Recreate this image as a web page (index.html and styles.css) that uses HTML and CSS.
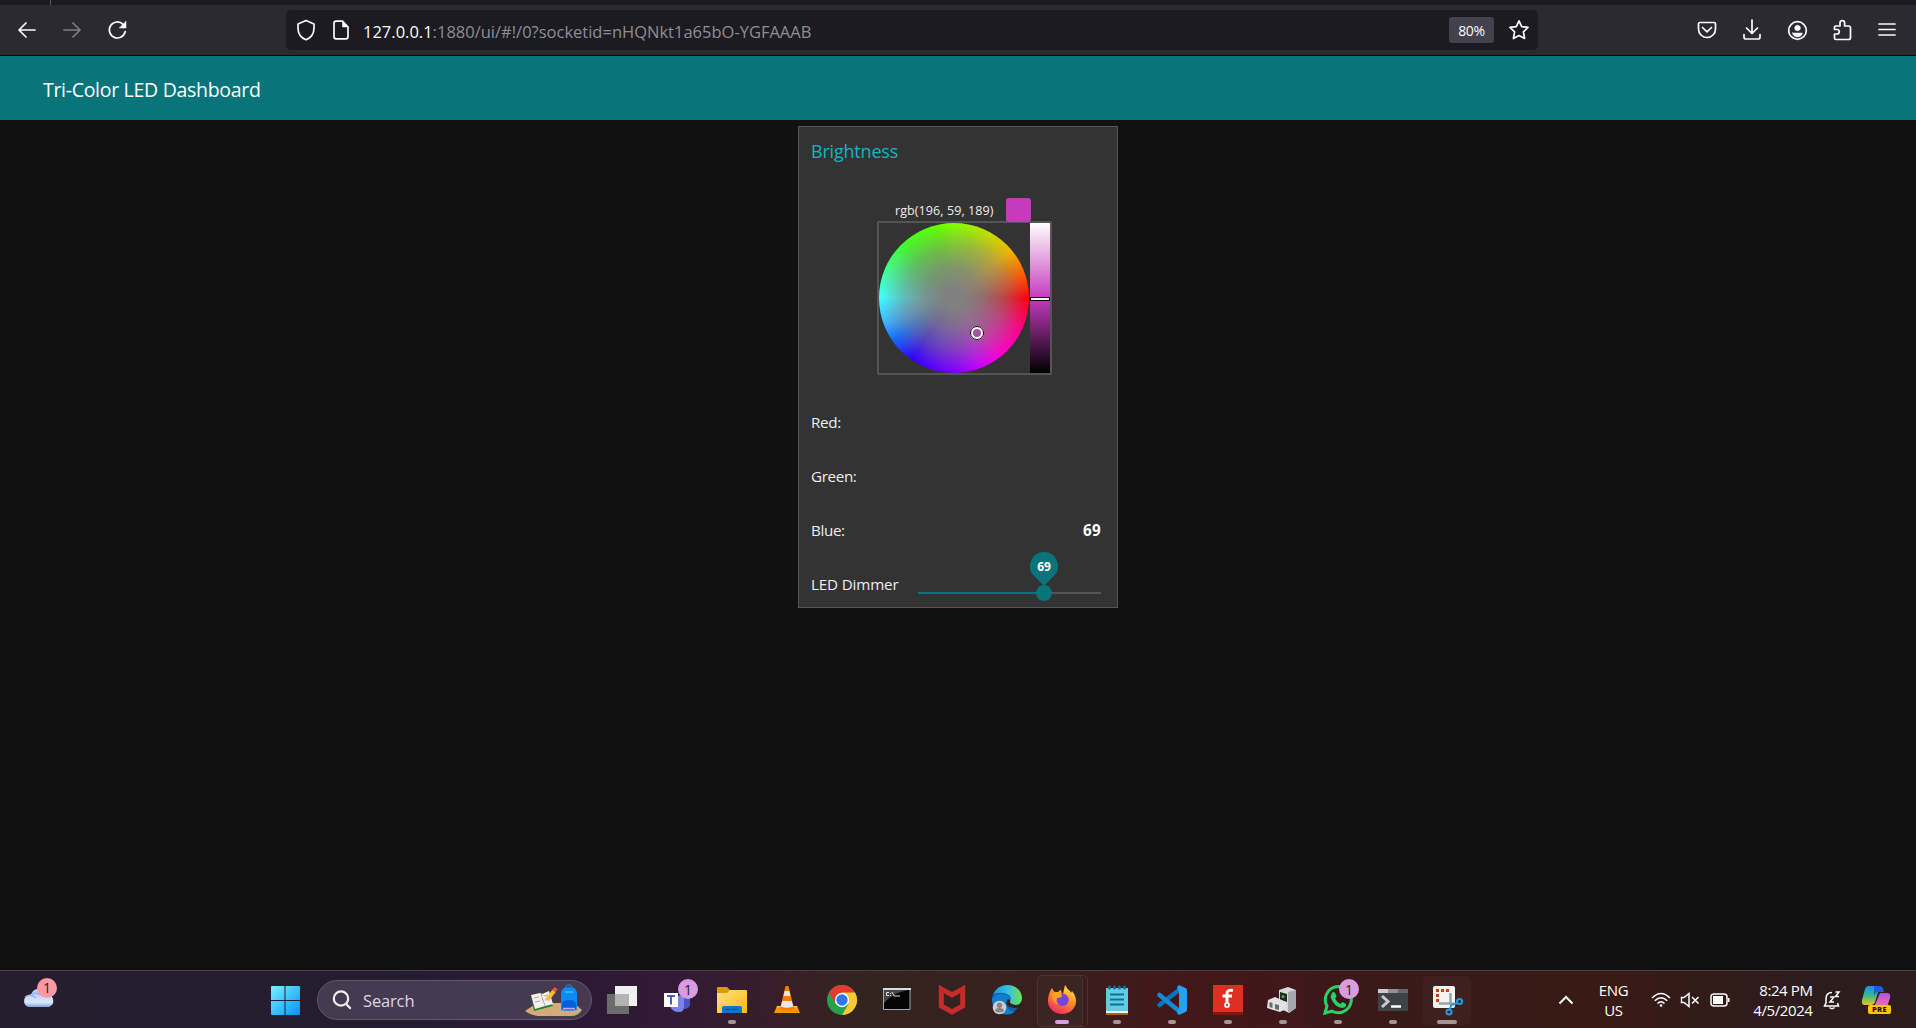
FILE: index.html
```html
<!DOCTYPE html>
<html lang="en">
<head>
<meta charset="utf-8">
<title>Tri-Color LED Dashboard</title>
<link rel="stylesheet" href="styles.css">
</head>
<body>
<div class="tabstrip"><i class="tab-divider"></i></div>
<nav class="toolbar">
  <div class="nav-buttons">
    <svg width="20" height="20" viewBox="0 0 20 20"><path d="M18 10H2M9 3 2 10l7 7"/></svg>
    <svg class="disabled" width="20" height="20" viewBox="0 0 20 20"><path d="M2 10h16M11 3l7 7-7 7"/></svg>
    <svg width="20" height="20" viewBox="0 0 20 20"><path d="M18.200 11.500A8 8 0 1 1 16 4.300l2 2"/><path class="solid" d="M19 1.500v6.500h-6.500z"/></svg>
  </div>
  <div class="urlbar">
    <svg width="20" height="22" viewBox="0 0 20 22"><path d="M10 1.500 18 5v4c0 6-3.500 10-8 11.800C5.500 19 2 15 2 9V5z"/></svg>
    <svg class="page-icon" width="18" height="20" viewBox="0 0 18 20"><path d="M10.500 1.200H4a2 2 0 0 0-2 2v13.600a2 2 0 0 0 2 2h10a2 2 0 0 0 2-2V7z"/><path class="solid" d="M10.500 1.200V7H16z"/></svg>
    <span class="url">127.0.0.1<span>:1880/ui/#!/0?socketid=nHQNkt1a65bO-YGFAAAB</span></span>
    <span class="zoom-level">80%</span>
    <svg width="22" height="22" viewBox="0 0 22 22"><path d="m11 1.800 2.700 5.800 6.300.8-4.600 4.400 1.200 6.700L11 16.600l-5.600 2.900 1.200-6.700L2 8.400l6.300-.8z"/></svg>
  </div>
  <div class="tools">
    <svg width="20" height="20" viewBox="0 0 20 20"><path d="M3 2.500h14a1.500 1.500 0 0 1 1.500 1.500v5a8.500 8.500 0 0 1-17 0V4A1.500 1.500 0 0 1 3 2.500zM5.500 7.500 10 11.800l4.500-4.300"/></svg>
    <svg width="20" height="20" viewBox="0 0 20 20"><path d="M10 0v13M4.500 8 10 13.500 15.500 8M2 14.500V17a2 2 0 0 0 2 2h12a2 2 0 0 0 2-2v-2.500"/></svg>
    <svg width="20" height="20" viewBox="0 0 20 20"><circle cx="10.500" cy="10.500" r="8.800"/><circle class="solid" cx="10.500" cy="8" r="2.800"/><path class="solid" d="M5.500 13h10q-1 4-5 4t-5-4z"/></svg>
    <svg width="20" height="22" viewBox="0 0 20 22"><path d="M3.500 7H8V4a2.300 2.300 0 0 1 4.600 0v3h3.900a2 2 0 0 1 2 2v9.500a2 2 0 0 1-2 2H4A1.500 1.500 0 0 1 2.500 19v-4H5a2 2 0 0 0 0-4.500H2.500V8a1 1 0 0 1 1-1z"/></svg>
    <svg width="20" height="20" viewBox="0 0 20 20"><path d="M2 4h16M2 9.500h16M2 15h16"/></svg>
  </div>
</nav>
<header class="appbar"><h1>Tri-Color LED Dashboard</h1></header>
<main class="content">
  <section class="card">
    <h2>Brightness</h2>
    <div class="picker">
      <div class="picker-head"><span>rgb(196, 59, 189)</span><i class="swatch"></i></div>
      <div class="picker-body">
        <div class="wheel"><i class="wheel-marker"></i></div>
        <div class="lightness"><i class="lightness-marker"></i></div>
      </div>
    </div>
    <div class="row"><span>Red:</span></div>
    <div class="row"><span>Green:</span></div>
    <div class="row"><span>Blue:</span><strong>69</strong></div>
    <div class="row dimmer"><span>LED Dimmer</span>
      <div class="slider"><i class="fill"></i><i class="thumb"></i>
        <svg class="pin" width="28" height="36" viewBox="0 0 28 36"><path d="M14 0a14 14 0 0 1 9.900 23.900L14 34 4.100 23.900A14 14 0 0 1 14 0z"/><text x="14" y="18.800">69</text></svg>
      </div>
    </div>
  </section>
</main>
<footer class="taskbar">
  <svg class="weather" width="36" height="32" viewBox="0 0 36 32">
    <defs><linearGradient id="cloud" x2="0" y2="1"><stop stop-color="#a8c6f6"/><stop offset=".75" stop-color="#dce8fa"/><stop offset="1" stop-color="#7fa2e0"/></linearGradient></defs>
    <path fill="url(#cloud)" d="M6 30a6 6 0 0 1-1-11.500 6 6 0 0 1 3-1A9 9 0 0 1 25 17.500a6.500 6.500 0 0 1 1 12.500z"/>
    <path fill="none" stroke="#8eb0ec" stroke-width="1.200" d="M2 20q6-4 11 1M9 17q5-2 8 1"/>
    <circle cx="24" cy="11" r="10" fill="#ff98a2"/><text class="badge" x="24" y="16">1</text>
  </svg>
  <svg class="start" width="30" height="30" viewBox="0 0 30 30">
    <defs><linearGradient id="win" x2="1" y2="1" gradientUnits="objectBoundingBox"><stop stop-color="#75f1ff"/><stop offset="1" stop-color="#0692fa"/></linearGradient></defs>
    <path fill="url(#win)" d="M1 2q0-1 1-1h12.500v14H1zM15.500 1H29q1 0 1 1v13H15.500zM1 16h13.500v14H2q-1 0-1-1zM15.500 16H30v13q0 1-1 1H15.500z"/>
  </svg>
  <div class="search">
    <svg width="20" height="20" viewBox="0 0 20 20"><circle cx="9" cy="8.500" r="7.200"/><path d="m14.200 14 4.500 4.800"/></svg>
    <span>Search</span>
    <svg class="scene" width="60" height="32" viewBox="0 0 60 32">
      <path fill="#d3ab78" d="m1 27 12-8h37l8 7q-4 6-11 6H14Q6 31 1 27z"/>
      <path fill="#248343" d="m7 12 3 15 19-5-3-6-14 6-3-11z"/><path fill="#f6f1ec" d="m7 11 9-2 2 1 7-3 4 13-8 2-10 3z"/><path fill="none" stroke="#aaa" d="m17 10 4 12M10 14l5-1M11 18l5-1M20 12l4-1M21 16l4-1"/>
      <path stroke="#f9bd35" stroke-width="4" d="m23 16 7-9"/><path stroke="#f1573d" stroke-width="4" d="m30 7 2-3"/>
      <rect x="41" y="1" width="8" height="8" rx="4" fill="none" stroke="#1a71dc" stroke-width="1.500"/><path fill="#0d8cf9" d="M37 26V10q0-7 8-7t8 7v16q-8 2-16 0z"/><path fill="#0460d8" d="M38 25v-5q0-4 7-4t7 4v5z"/><path stroke="#c79bff" stroke-width="1.500" d="M39 24.500h12"/><path stroke="#61c2ff" stroke-width="1.200" d="M41 8h8"/>
    </svg>
  </div>
  <div class="apps">
    <div class="app"><svg viewBox="0 0 30 30"><path fill="#6c6c6c" d="M0 9h22v20H0z"/><path fill="#f0f0f0" d="M8 1h22v20H8z"/><path fill="#b5b2b4" d="M8 9h14v12H8z"/></svg></div>
    <div class="app"><svg viewBox="0 0 30 30"><path fill="#4856c4" d="M17 10h11v10q-1 4-6 4z"/><path fill="#7b83eb" d="M8 11h14v11q0 5-5 5-7 0-9-6z"/><path fill="#fff" d="M2 8h14v14H2z"/><path fill="none" stroke="#5059c9" stroke-width="2" d="M5 11h8M9 11v8.500"/><circle cx="26" cy="4" r="10" fill="#da9be0"/><text class="badge" x="26" y="9.500">1</text></svg></div>
    <div class="app"><svg viewBox="0 0 30 30"><defs><linearGradient id="fold" x2="1" y2="1"><stop stop-color="#ffe084"/><stop offset="1" stop-color="#fdb913"/></linearGradient></defs><path fill="#d99a08" d="M0 3q0-1 1-1h9l3 3v5H0z"/><path fill="url(#fold)" d="M0 8h10l3-3h16q1 0 1 1v22H0z"/><path fill="#0c77c8" d="M5 28v-5q0-2 2-2h16q2 0 2 2v5z"/><path stroke="#064f8e" stroke-width="1.200" d="M8 24.500h14"/></svg><i class="dot"></i></div>
    <div class="app"><svg viewBox="0 0 30 30"><path fill="#ff9309" d="M5 21h20l3 7H2z"/><path fill="#ffbd4a" d="M5 21h20l.5 1.500H4.500z"/><path fill="#f57c00" d="m13.500 1h3L22 24q-7 3-14 0z"/><path fill="#e8e8e8" d="m12.700 6h4.600l1.200 5h-7zM10.300 16h9.500l1.500 5.500q-6.300 2.500-12.500 0z"/></svg></div>
    <div class="app"><svg viewBox="0 0 30 30"><circle cx="15" cy="15" r="15" fill="#26a149"/><path fill="#e33b2e" d="M2 7.500A15 15 0 0 1 28 7.500L15 8.500 8.500 18.700z"/><path fill="#fcc934" d="M15 30a15 15 0 0 0 13-22.500H15L21.500 19z"/><circle cx="15" cy="15" r="7.200" fill="#fff"/><circle cx="15" cy="15" r="5.700" fill="#2b78ef"/></svg></div>
    <div class="app"><svg viewBox="0 0 30 30"><path fill="#050505" stroke="#a3a8b3" d="M1.500 4h26.500v20.500H1.500z"/><path stroke="#d8dce5" stroke-width="2" d="M1 4h28"/><path fill="#464646" d="M2 5h24Q10 8 2 18z"/><path fill="none" stroke="#ddd" d="M7 7.500H4.500v3H7M8.500 8v1M8.500 10v1M10 7l2 4M12 11h6"/></svg></div>
    <div class="app"><svg viewBox="0 0 30 30"><path fill="none" stroke="#c62b2b" stroke-width="5" d="M4.300 4v17L15 27l10.700-6V4L15 10z"/></svg></div>
    <div class="app"><svg viewBox="0 0 30 30"><defs><linearGradient id="edge" x2="1"><stop stop-color="#1498dc"/><stop offset=".5" stop-color="#35bfe7"/><stop offset="1" stop-color="#71e34b"/></linearGradient></defs><circle cx="14" cy="15" r="14" fill="#0b5fad"/><path fill="#117fd0" d="M0 14Q4 7 13 9q6 2 5 7-5 1-3 6 3 5 8 4-4 5-12 3Q0 26 0 14z"/><path fill="url(#edge)" d="M1 10Q5 0 15 0c9 0 15 6 15 13q0 7-8 7-5 0-4-3 3-7-6-9Q4 7 1 10z"/><path fill="#33211f" d="M16 14q-4 5 2 8 6 2 10 0l3-3q-6 2-11 0-3-1-2-4z"/><circle cx="7.500" cy="22.500" r="6.800" fill="#d0d0d0"/><circle cx="7.500" cy="20.300" r="2.700" fill="#858585"/><path fill="#858585" d="M3 26q0-3 4.500-3t4.500 3q-4.500 3-9 0z"/></svg></div>
    <div class="app active"><svg viewBox="0 0 30 30"><defs><linearGradient id="fox" x1=".8" x2=".3" y2="1"><stop stop-color="#fff04b"/><stop offset=".45" stop-color="#ff9025"/><stop offset="1" stop-color="#f62661"/></linearGradient></defs><path fill="url(#fox)" d="M5 3q1 3 3 4l3 0q2-2 3-2 0 3 2 4l2-9q2 4 5 6l1 2 1-2q4 5 4 10a14 13 0 0 1-28 0Q1 9 5 3z"/><circle cx="15.500" cy="14.800" r="6.200" fill="#7545d9"/><path fill="#ff9e27" d="M5 9q6-3 10 1 0 3-5 3-2 6 4 7-9 0-9-11z"/></svg><i class="dot wide"></i></div>
    <div class="app"><svg viewBox="0 0 30 30"><path fill="#b45f0d" d="M4 26h22v4H4z"/><path fill="#f6f1ea" d="M4 25h22v3H4z"/><path fill="#64cbe4" d="M4 3h22v23H4z"/><path stroke="#087499" stroke-width="2" d="M8 9.500h14M8 14.500h14M8 19.500h14"/><path stroke="#087499" stroke-width="3" stroke-linecap="round" d="M7.500 2v1M12.500 2v1M17.500 2v1M22.500 2v1"/></svg><i class="dot"></i></div>
    <div class="app"><svg viewBox="0 0 30 30"><path fill="none" stroke="#0876bf" stroke-width="4.500" stroke-linejoin="round" stroke-linecap="round" d="M22 5 2.500 20"/><path fill="none" stroke="#138bd6" stroke-width="4.500" stroke-linecap="round" d="M2.500 10 22 26"/><path fill="#27a0f2" d="m22 0 6.500 3q1.500 1 1.500 2v20q0 1-1.500 2L22 30l-2-2 2-5V8l-2-6z"/></svg><i class="dot"></i></div>
    <div class="app"><svg viewBox="0 0 30 30"><path fill="#dc3022" d="M0 0h30v27H0z"/><path fill="#841807" d="M0 27h30v3H0z"/><path fill="none" stroke="#fff" stroke-width="3" d="M20 5.500q-6-1-6 3V18M9.500 11H19"/><circle cx="14" cy="20" r="2" fill="none" stroke="#fff" stroke-width="1.700"/></svg><i class="dot"></i></div>
    <div class="app"><svg class="device" viewBox="0 0 30 30"><path fill="#d8d9dc" d="m13 5 9-3 8 3v18l-7 5-10-5z"/><path fill="#a5a7ab" d="m22 7 8-2v18l-8 5z"/><path fill="#202923" d="m14 7 7 2v8l-7-2z"/><circle cx="17" cy="11.500" r="1.500" fill="#2ec82e"/><path fill="#e2e2e3" d="m2 15 7-3 11 5v7l-6 3-13-4z"/><path fill="#696b70" d="m3.500 17 3 1v5l-3-1zM9 19l4 1v5l-4-1z"/></svg><i class="dot"></i></div>
    <div class="app"><svg viewBox="0 0 30 30"><path fill="none" stroke="#25d366" stroke-width="3" d="m2 28 2-7a13 13 0 1 1 5 5z"/><path fill="#25d366" d="M9 8q2-2 3 0l1.500 3q0 1-1.500 2.500 2 4 5.500 5.500l2-2 3.500 2q1 3-4 4-8-1-11.500-11Q8 9.500 9 8z"/><circle cx="26" cy="4" r="10" fill="#da9be0"/><text class="badge" x="26" y="9.500">1</text></svg><i class="dot"></i></div>
    <div class="app"><svg viewBox="0 0 30 30"><path fill="#3e4347" d="M0 4h30v22H0z"/><path fill="#ccc" d="M0 4h10v4H0z"/><path fill="#929292" d="M10 4h10v4H10z"/><path fill="#65676b" d="M20 4h10v4H20z"/><path fill="none" stroke="#ccc" stroke-width="3" d="m4 11 6 5.500L4 22"/><path stroke="#fff" stroke-width="2.500" d="M13 21.500h10"/></svg><i class="dot"></i></div>
    <div class="app focused"><svg viewBox="0 0 30 30"><rect y="1" width="22" height="22" rx="2" fill="#f3f3f3"/><path fill="none" stroke="#d83b01" stroke-width="3" stroke-dasharray="3 2" d="M4.500 17V5.500H17"/><path fill="none" stroke="#9aa2aa" stroke-width="2.500" d="M17.500 8v12M6 18.500h15"/><g fill="none" stroke="#1e9be5" stroke-width="2"><circle cx="26.500" cy="16.500" r="2.600"/><circle cx="16" cy="27" r="2.600"/><path d="m19 20 5-2M18.500 19 17 24"/></g></svg><i class="dot widest"></i></div>
  </div>
  <div class="tray">
    <svg class="chevron" width="16" height="10" viewBox="0 0 16 10"><path d="m1.500 8.500 6.500-6.500 6.500 6.500"/></svg>
    <div class="lang"><span>ENG</span><span>US</span></div>
    <svg class="wifi" width="20" height="16" viewBox="0 0 20 16"><path d="M1 6q9-9 18 0M3.800 8.800q6.200-6 12.400 0M6.500 11.500q3.500-3.500 7 0"/><circle class="solid" cx="10" cy="13.500" r="1.300"/></svg>
    <svg class="sound" width="20" height="16" viewBox="0 0 20 16"><path d="M1.500 5.500v5H4l5 4V1.500l-5 4zM12 5l6.500 6.500M18.500 5 12 11.500"/></svg>
    <svg class="battery" width="20" height="14" viewBox="0 0 20 14"><rect x="1" y="1" width="16" height="12" rx="3"/><path class="solid" d="M3 3h10v8H3z"/><path d="M18.800 5v4"/></svg>
    <div class="clock"><span>8:24 PM</span><span>4/5/2024</span></div>
    <svg class="bell" width="18" height="20" viewBox="0 0 18 20"><path d="M9 2.500Q3 2.500 3 9v4l-1.500 3h14L14.500 13M6.500 17.500q2.500 2.500 5 0M7 7h4l-4 5h4M12.500 2H16l-3.500 4.500H16"/></svg>
    <svg class="copilot" width="30" height="30" viewBox="0 0 30 30"><defs><linearGradient id="cpa" x2="0" y2="1"><stop stop-color="#1b8df0"/><stop offset=".5" stop-color="#3cb98a"/><stop offset="1" stop-color="#ecc31b"/></linearGradient><linearGradient id="cpb" x2="0" y2="1"><stop stop-color="#b252ed"/><stop offset="1" stop-color="#f6709c"/></linearGradient></defs><path fill="url(#cpa)" d="M7 1h12l-5 16q-1 3-3 3H4q-4 0-3-5L4 4q1-3 3-3z"/><path fill="#1b5fd8" d="M13 1h6q3 0 4 6h-6q-3 0-4 5z"/><path fill="url(#cpb)" d="M19 8h7q4 0 3 5l-3 9H13z"/><rect x="7" y="20" width="23" height="9" rx="2" fill="#fdc400"/><text x="18.500" y="27.300">PRE</text></svg>
  </div>
</footer>
</body>
</html>
```

FILE: styles.css
```css
* { box-sizing: border-box; }
body { margin: 0; height: 1028px; overflow: hidden; display: flex; flex-direction: column; background: #111; color: #eee; font-family: "Open Sans", "Noto Sans", sans-serif; font-size: 15px; }
h1, h2 { margin: 0; font-weight: 400; }
span, h1 { white-space: nowrap; }
svg { display: block; flex: none; overflow: visible; }

.tabstrip { height: 5px; background: #1c1b22; padding-left: 50px; }
.tab-divider { display: block; width: 1px; height: 5px; background: #5b5a62; }
.toolbar { height: 51px; background: #2b2a33; border-bottom: 1px solid #0c0c0d; display: flex; align-items: center; }
.toolbar svg { fill: none; stroke: #fbfbfe; stroke-width: 1.7; stroke-linejoin: round; stroke-linecap: round; }
.toolbar .solid { fill: #fbfbfe; stroke-width: .5; }
.nav-buttons { display: flex; gap: 25px; width: 286px; padding-left: 17px; }
.nav-buttons .disabled { opacity: .4; }
.urlbar { width: 1252px; height: 40px; border-radius: 5px; background: #1c1b22; display: flex; align-items: center; padding: 0 8px 0 10px; }
.page-icon { margin-left: 16px; }
.url { margin-left: 13px; flex: 1; font-size: 16.5px; color: #fbfbfe; padding-top: 2px; }
.url span { color: #8f8e96; }
.zoom-level { width: 45px; height: 26px; margin-right: 14px; border-radius: 3px; background: #42414d; color: #fbfbfe; text-align: center; font-size: 14px; letter-spacing: -.3px; line-height: 28px; }
.tools { margin-left: 159px; display: flex; align-items: center; gap: 25px; }

.appbar { height: 64px; background: #097479; color: #fff; padding-left: 43px; display: flex; align-items: center; }
.appbar h1 { font-size: 19.5px; letter-spacing: -.3px; padding-top: 3px; }
.content { height: 850px; padding-top: 6px; }
.card { width: 320px; height: 482px; margin-left: 798px; background: #333; border: 1px solid #555; padding: 0 16px 0 12px; }
.card h2 { height: 71px; padding-top: 11px; font-size: 18px; letter-spacing: -.2px; line-height: 26px; color: #0eb8c0; }
.picker { width: 175px; margin-left: 66px; height: 197px; }
.picker-head { height: 23px; display: flex; justify-content: space-between; padding: 0 21px 0 18px; font-size: 12.5px; letter-spacing: .085px; line-height: 25px; }
.swatch { width: 25px; height: 24px; border-radius: 3px; background: #c43bbd; }
.picker-body { height: 154px; border: 2px solid #555; border-radius: 2px; display: flex; justify-content: space-between; }
.wheel { position: relative; width: 150px; height: 150px; border-radius: 50%; background: radial-gradient(closest-side, #808080 0 12%, rgba(128,128,128,.82) 40%, rgba(128,128,128,.5) 68%, rgba(128,128,128,0) 98%), conic-gradient(from 90deg, #ff0010, #f08, #f0c 50deg, #c0f 68deg, #8000ff 90deg, #3000ff 125deg, #1068ff 145deg, #40b0ff 160deg, #40ffff 180deg, #40ffa0 200deg, #40ff30 225deg, #60ff00 255deg, #80ff00 270deg, #c0e000 298deg, #f0b800 320deg, #ff6000 340deg, #ff0010); }
.wheel-marker { position: absolute; left: 91px; top: 103px; width: 14px; height: 14px; border: 3px solid #fff; outline: 1px solid #000; outline-offset: -1px; border-radius: 50%; }
.lightness { position: relative; width: 20px; background: linear-gradient(#fff, #c43bbd 50%, #000); }
.lightness-marker { position: absolute; top: 74px; left: 0; width: 20px; height: 4px; background: #fff; border: 1px solid #000; }
.row { height: 54px; display: flex; align-items: center; justify-content: space-between; font-size: 15.2px; letter-spacing: -.35px; }
.row.dimmer { letter-spacing: -.15px; }
.row strong { color: #fff; letter-spacing: .3px; }
.slider { position: relative; width: 183px; height: 2px; background: #555; margin-top: 18px; }
.fill { position: absolute; left: 0; top: 0; width: 126px; height: 2px; background: #097479; }
.thumb { position: absolute; left: 118px; top: -7px; width: 16px; height: 16px; border-radius: 50%; background: #097479; }
.pin { position: absolute; left: 112px; top: -40px; fill: #097479; }
.pin text { fill: #fff; font-size: 12px; font-weight: 700; text-anchor: middle; }

.taskbar { height: 58px; border-top: 1px solid #494049; display: flex; align-items: center; background: linear-gradient(90deg, #241e2e 0, #251c31 400px, #2d1936 590px, #311a35 670px, #391e28 780px, #33231f 860px, #37211f 1000px, #431719 1200px, #3e181a 1300px, #371b17 1450px, #391a15 1600px, #2d1c1b 1780px, #2c1c1e 1916px); }
.badge { font-size: 14px; text-anchor: middle; fill: #2b1b22; }
.weather { margin: -14px 0 0 23px; }
.start { margin: 0 0 0 211px; }
.search { width: 275px; height: 40px; margin-left: 17px; border: 1px solid #62566b; border-radius: 20px; background: #463a51; display: flex; align-items: center; padding: 0 7px 0 14px; font-size: 16.5px; letter-spacing: -.15px; color: #ddd8e0; }
.search > svg:first-child { fill: none; stroke: #eee; stroke-width: 2.2; }
.search span { margin-left: 11px; flex: 1; padding-top: 1px; }
.apps { display: flex; margin-left: 2px; }
.app { position: relative; width: 55.1px; height: 57px; display: grid; place-items: center; }
.app > svg { position: relative; width: 30px; height: 30px; }
.app > .device { left: -2px; }
.dot { position: absolute; bottom: 4px; left: 23.5px; width: 8px; height: 4px; border-radius: 2px; background: #a39595; }
.dot.wide { left: 20px; width: 14px; background: #d99de3; }
.dot.widest { left: 17px; width: 20px; }
.active::before { content: ""; position: absolute; left: 2px; top: 4px; width: 44px; height: 50px; border: 1px solid #4a3533; border-radius: 5px; background: #3b2523; }
.active::after { content: ""; position: absolute; left: 40px; top: 4px; width: 12px; height: 50px; border: 1px solid #4a3533; border-left: 0; border-radius: 0 5px 5px 0; }
.focused::before { content: ""; position: absolute; left: 3px; top: 5px; width: 48px; height: 49px; border-radius: 5px; background: #3e211d; }
.tray { display: flex; align-items: center; font-size: 15px; letter-spacing: -.4px; line-height: 20px; color: #fff; margin-left: 82px; }
.tray svg { fill: none; stroke: #fff; stroke-width: 1.5; }
.tray .solid { fill: #fff; stroke: none; }
.chevron path { stroke-width: 2; }
.lang { width: 30px; margin-left: 25px; display: flex; flex-direction: column; align-items: center; }
.tray .wifi { margin-left: 22px; }
.tray .sound { margin-left: 9px; }
.tray .battery { margin-left: 10px; }
.clock { width: 64px; margin-left: 19px; display: flex; flex-direction: column; align-items: flex-end; }
.tray .bell { margin-left: 10px; }
.tray .copilot { margin-left: 20px; stroke: none; }
.copilot text { fill: #1d1603; font-size: 7.5px; font-weight: 800; text-anchor: middle; letter-spacing: .4px; }
```
